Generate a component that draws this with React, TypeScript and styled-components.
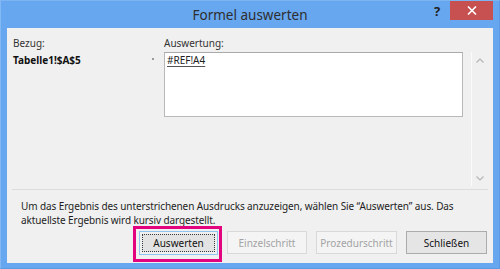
import styled, { createGlobalStyle } from "styled-components";

const GlobalStyle = createGlobalStyle`
  html, body {
    margin: 0;
    padding: 0;
    background: #ffffff;
  }
  body {
    font-family: "Noto Sans", "Open Sans", sans-serif;
  }
`;

const Window = styled.div`
  width: 500px;
  height: 269px;
  box-sizing: border-box;
  background: #67a7ef;
  border: 1px solid #5c9be3;
  border-top-color: #7cb4f2;
  border-left-color: #82b8f3;
  display: flex;
  flex-direction: column;
  padding: 0 6px 5px 6px;
`;

const TitleBar = styled.div`
  height: 27px;
  display: grid;
  grid-template-columns: 1fr auto 1fr;
  align-items: start;
`;

const Title = styled.div`
  grid-column: 2;
  font-size: 13.5px;
  line-height: 28px;
  color: #2e2e2e;
`;

const Controls = styled.div`
  grid-column: 3;
  justify-self: end;
  display: flex;
  align-items: flex-start;
`;

const HelpButton = styled.div`
  width: 26px;
  height: 19px;
  display: flex;
  align-items: center;
  justify-content: center;
  font-size: 13px;
  font-weight: 700;
  color: #1f1f1f;
`;

const CloseButton = styled.div`
  width: 43px;
  height: 19px;
  background: #c75050;
  display: flex;
  align-items: center;
  justify-content: center;
`;

const Content = styled.div`
  flex: 1;
  background: #f0f0f0;
  display: flex;
  flex-direction: column;
  padding: 0 5px;
  font-size: 10px;
  color: #1a1a1a;
`;

const HeaderRow = styled.div`
  display: grid;
  grid-template-columns: 151px 1fr;
  padding: 8px 0 0 1px;
  height: 14px;
  line-height: 14px;
  color: #333333;
`;

const Body = styled.div`
  display: flex;
  margin-top: 2px;
  height: 134px;
  border-bottom: 1px solid #dcdcdc;
  padding-bottom: 3px;
`;

const Fields = styled.div`
  flex: 1;
  display: grid;
  grid-template-columns: 139px 12px 299px;
  align-items: start;
  padding-left: 1px;
`;

const RefValue = styled.div`
  font-weight: 700;
  line-height: 14px;
  margin-top: 1px;
  color: #111111;
`;

const Marker = styled.span`
  width: 2px;
  height: 2px;
  margin-top: 6px;
  background: #9a9a9a;
`;

const EvalBox = styled.div`
  height: 63px;
  background: #ffffff;
  border: 1px solid #b8b8b8;
  border-top-color: #a9a9a9;
  line-height: 14px;
  padding: 0 2px;
`;

const Underlined = styled.span`
  text-decoration: underline;
  text-decoration-color: #555555;
  text-underline-offset: 2px;
  color: #222222;
`;

const ScrollBar = styled.div`
  width: 16px;
  border-left: 1px solid #fbfbfb;
  display: flex;
  flex-direction: column;
  justify-content: space-between;
  align-items: center;
  padding: 6px 0 5px;
`;

const ContentFooter = styled.div`
  display: flex;
  flex-direction: column;
`;

const Description = styled.p`
  margin: 10px 0 0 9px;
  line-height: 13.5px;
  letter-spacing: -0.1px;
  color: #1e1e1e;
`;

const ButtonRow = styled.div`
  display: flex;
  justify-content: flex-end;
  gap: 9px;
  margin-top: 4px;
  padding-right: 1px;
`;

const Button = styled.button<{ $disabled?: boolean; $width: number }>`
  width: ${(p) => p.$width}px;
  height: 23px;
  box-sizing: border-box;
  font-family: inherit;
  font-size: 10px;
  padding: 0;
  border: 1px solid ${(p) => (p.$disabled ? "#d9d9d9" : "#acacac")};
  background: ${(p) => (p.$disabled ? "#f4f4f4" : "#e5e5e5")};
  color: ${(p) => (p.$disabled ? "#a3a3a3" : "#111111")};
`;

const FocusWrap = styled.div`
  position: relative;
  display: flex;

  &::after {
    content: "";
    position: absolute;
    top: -5px;
    bottom: -7px;
    left: -6px;
    right: -4px;
    border: 3px solid #e4037e;
    pointer-events: none;
  }
`;

const DefaultButton = styled.button`
  width: 79px;
  height: 24px;
  box-sizing: border-box;
  font-family: inherit;
  font-size: 10px;
  padding: 2px;
  border: 1px solid #8fc3f1;
  background: #f0f0f0;
  color: #111111;
  display: flex;
`;

const DottedFace = styled.span`
  flex: 1;
  display: flex;
  align-items: center;
  justify-content: center;
  border: 1px dotted #3a3a3a;
  background: #e3e3e3;
`;

function Chevron({ up }: { up?: boolean }) {
  return (
    <svg width="8" height="5" viewBox="0 0 8 5">
      <path
        d={up ? "M0.5 4.5 L4 1 L7.5 4.5" : "M0.5 0.5 L4 4 L7.5 0.5"}
        fill="none"
        stroke="#b5b5b5"
        strokeWidth="1.2"
      />
    </svg>
  );
}

export default function App() {
  return (
    <>
      <GlobalStyle />
      <Window>
        <TitleBar>
          <Title>Formel auswerten</Title>
          <Controls>
            <HelpButton>?</HelpButton>
            <CloseButton>
              <svg width="10" height="9" viewBox="0 0 10 9">
                <path d="M1 0.5 L9 8.5 M9 0.5 L1 8.5" stroke="#ffffff" strokeWidth="1.6" />
              </svg>
            </CloseButton>
          </Controls>
        </TitleBar>
        <Content>
          <HeaderRow>
            <span>Bezug:</span>
            <span>Auswertung:</span>
          </HeaderRow>
          <Body>
            <Fields>
              <RefValue>Tabelle1!$A$5</RefValue>
              <Marker />
              <EvalBox>
                <Underlined>#REF!A4</Underlined>
              </EvalBox>
            </Fields>
            <ScrollBar>
              <Chevron up />
              <Chevron />
            </ScrollBar>
          </Body>
          <ContentFooter>
            <Description>
              Um das Ergebnis des unterstrichenen Ausdrucks anzuzeigen, wählen Sie “Auswerten” aus. Das
              <br />
              aktuellste Ergebnis wird kursiv dargestellt.
            </Description>
            <ButtonRow>
              <FocusWrap>
                <DefaultButton>
                  <DottedFace>Auswerten</DottedFace>
                </DefaultButton>
              </FocusWrap>
              <Button $disabled $width={80}>Einzelschritt</Button>
              <Button $disabled $width={81}>Prozedurschritt</Button>
              <Button $width={81}>Schließen</Button>
            </ButtonRow>
          </ContentFooter>
        </Content>
      </Window>
    </>
  );
}
